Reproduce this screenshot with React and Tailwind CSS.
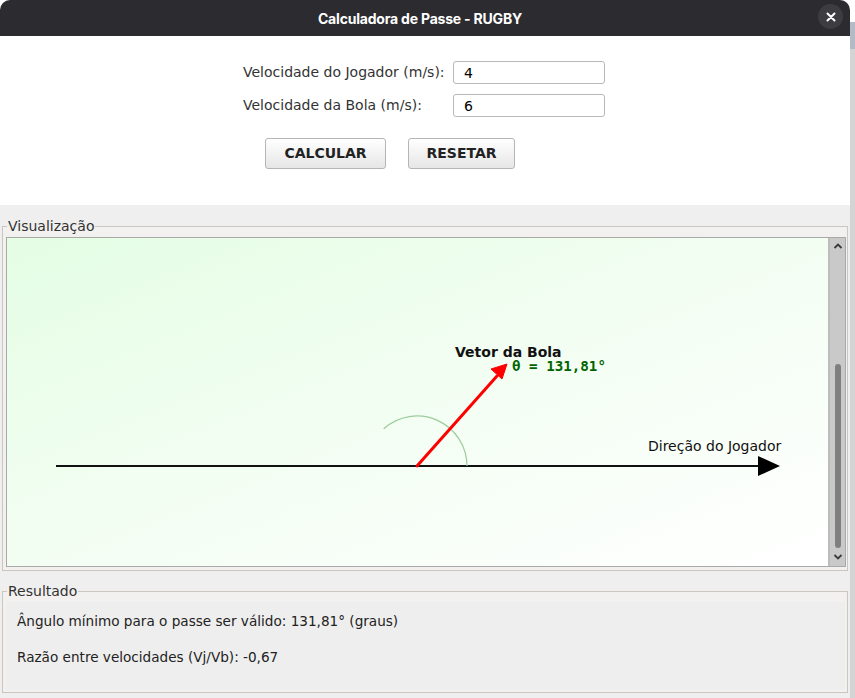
import React from "react";

/* ------------ Title Bar ------------ */
const TitleBar = () => {
  return (
    <div className="relative h-[36px] shrink-0 bg-[#2c2b2f] flex items-center justify-center">
      <span className="text-white text-[14px] font-bold font-['Inter',sans-serif] tracking-[-0.2px] pr-[10px]">
        Calculadora de Passe - RUGBY
      </span>
      <div className="absolute right-[7px] top-[4px] w-[25px] h-[25px] rounded-full bg-[#3d3c41] flex items-center justify-center">
        <svg width="10" height="10" viewBox="0 0 10 10">
          <path d="M1.5 1.5 L8.5 8.5 M8.5 1.5 L1.5 8.5" stroke="#ffffff" strokeWidth="2" strokeLinecap="round" />
        </svg>
      </div>
    </div>
  );
};

/* ------------ Form ------------ */
const Field = ({ label, value }) => {
  return (
    <div className="flex items-center">
      <span className="w-[210px] text-[#333333]">{label}</span>
      <input
        readOnly
        defaultValue={value}
        className="w-[152px] h-[23px] border border-[#b9b9b9] rounded-[3px] bg-white px-[10px] text-[14px] text-black outline-none font-['DejaVu_Sans',sans-serif]"
      />
    </div>
  );
};

const Button = ({ children, width }) => {
  return (
    <button
      className={`${width} h-[31px] rounded-[3px] border border-[#b5b5b5] bg-gradient-to-b from-white to-[#e6e6e6] text-[14px] font-bold text-[#222222] font-['DejaVu_Sans',sans-serif]`}
    >
      {children}
    </button>
  );
};

/* ------------ Drawing ------------ */
const Drawing = () => {
  return (
    <svg width="820" height="328" viewBox="0 0 820 328" className="block">
      {/* player direction */}
      <line x1="49" y1="228" x2="753" y2="228" stroke="#111111" strokeWidth="2.2" />
      <polygon points="751,218 773,228 751,238" fill="#000000" />
      <text x="641" y="213" fontFamily="DejaVu Sans, sans-serif" fontSize="14" fill="#111111">
        Direção do Jogador
      </text>

      {/* angle arc */}
      <path d="M 460 228 A 50 50 0 0 0 376.7 190.7" fill="none" stroke="#9ccc9c" strokeWidth="1.2" />

      {/* ball vector */}
      <line x1="410" y1="228" x2="490" y2="138" stroke="#ff0000" strokeWidth="3" strokeLinecap="round" />
      <polygon points="500,126 495,141 484,131" fill="#ff0000" stroke="#ff0000" strokeWidth="1" strokeLinejoin="round" />
      <text x="448" y="119" fontFamily="DejaVu Sans, sans-serif" fontSize="14" fontWeight="bold" fill="#111111">
        Vetor da Bola
      </text>
      <text x="505" y="133" fontFamily="DejaVu Sans Mono, monospace" fontSize="14.2" fontWeight="bold" fill="#006400">
        θ = 131,81°
      </text>
    </svg>
  );
};

const ScrollBar = () => {
  return (
    <div className="w-[17px] shrink-0 bg-[#c9c9c9] border-l-2 border-[#bcbcbc] flex flex-col items-center">
      <svg width="12" height="16" viewBox="0 0 12 16" className="shrink-0">
        <path d="M2.5 10 L6 6.5 L9.5 10" fill="none" stroke="#3a3a3a" strokeWidth="1.8" />
      </svg>
      <div className="flex-1 flex flex-col justify-end pb-[2px]">
        <div className="w-[6px] h-[184px] rounded-full bg-[#7f7f7f]"></div>
      </div>
      <svg width="12" height="16" viewBox="0 0 12 16" className="shrink-0">
        <path d="M2.5 5 L6 8.5 L9.5 5" fill="none" stroke="#3a3a3a" strokeWidth="1.8" />
      </svg>
    </div>
  );
};

const App = () => {
  return (
    <div className="w-[855px] h-[698px] overflow-hidden bg-white flex font-['DejaVu_Sans',sans-serif] text-[14px]">
      <div className="w-[850px] h-full flex flex-col rounded-t-[10px] overflow-hidden bg-[#efefef]">
        <TitleBar />

        {/* Inputs */}
        <div className="h-[169px] shrink-0 bg-white pl-[243px] pt-[25px]">
          <div className="flex flex-col gap-[10px]">
            <Field label="Velocidade do Jogador (m/s):" value="4" />
            <Field label="Velocidade da Bola (m/s):" value="6" />
          </div>
          <div className="flex gap-[22px] pl-[22px] mt-[21px]">
            <Button width="w-[121px]">CALCULAR</Button>
            <Button width="w-[107px]">RESETAR</Button>
          </div>
        </div>

        {/* Lower area */}
        <div className="flex-1 px-[2px] pt-[13px] bg-[#efefef]">
          <fieldset className="border border-[#cbc6c0] bg-[#f2f1f0] pl-[3px] pr-[1px] pb-[3px] pt-[2px]">
            <legend className="ml-[1px] px-[1px] leading-[17px] text-[#333333]">Visualização</legend>
            <div className="h-[330px] border border-[#a9a9a9] flex">
              <div className="flex-1 bg-gradient-to-br from-[#e4fde4] via-[#f3fef3] to-white overflow-hidden">
                <Drawing />
              </div>
              <ScrollBar />
            </div>
          </fieldset>

          <fieldset className="mt-[12px] border border-[#cbc6c0] bg-[#f2f1f0] pl-[3px] pr-[2px] pb-[2px] pt-[2px]">
            <legend className="ml-[1px] px-[1px] leading-[17px] text-[#333333]">Resultado</legend>
            <div className="h-[88px] bg-[#eeeeee] pl-[11px] pt-[10px] flex flex-col gap-[18px] text-[#222222] text-[13.6px] leading-[18px]">
              <span>Ângulo mínimo para o passe ser válido: 131,81° (graus)</span>
              <span>Razão entre velocidades (Vj/Vb): -0,67</span>
            </div>
          </fieldset>
        </div>
      </div>

      {/* backdrop strip */}
      <div className="w-[5px] h-full flex flex-col">
        <div className="h-[22px] bg-white"></div>
        <div className="h-[27px] bg-[#b3bcc6]"></div>
        <div className="flex-1 bg-[#d4d4d4]"></div>
      </div>
    </div>
  );
};

export default App;
